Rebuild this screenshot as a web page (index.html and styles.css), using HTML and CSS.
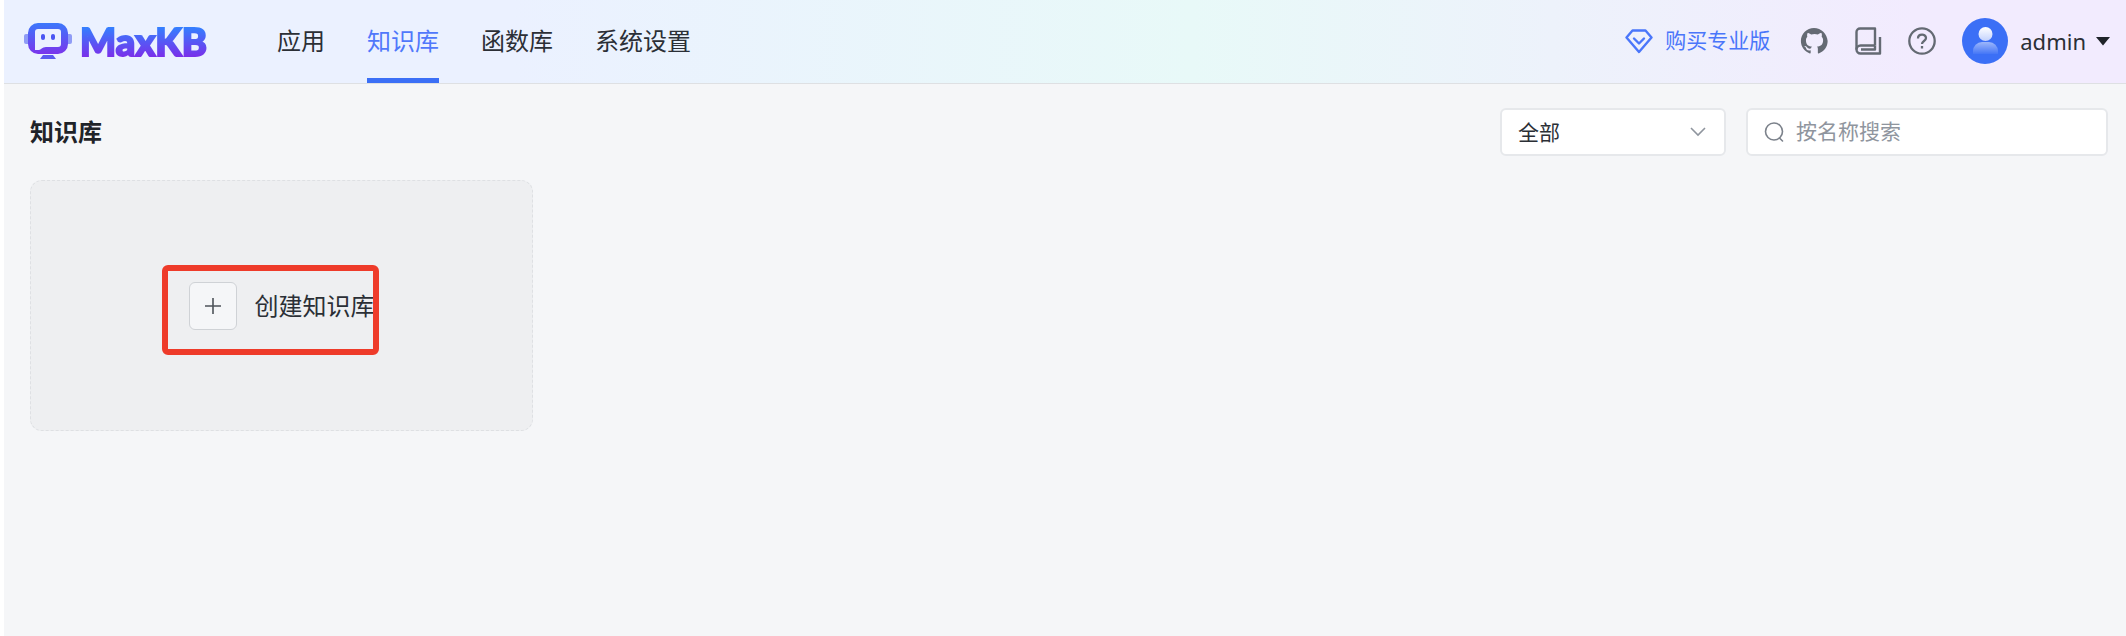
FILE: index.html
```html
<!DOCTYPE html>
<html lang="zh-CN">
<head>
    <meta charset="UTF-8">
    <meta name="viewport" content="width=device-width, initial-scale=1.0">
    <title>MaxKB</title>
    <link rel="stylesheet" href="styles.css">
</head>
<body>
    <header class="header">
        <a href="#" class="logo">
            <svg width="48" height="38" viewBox="0 0 48 38">
                <defs>
                    <linearGradient id="logoFill" x1="0" y1="0" x2="0" y2="1">
                        <stop offset="0" stop-color="#3c78fb"/>
                        <stop offset="1" stop-color="#7a35ec"/>
                    </linearGradient>
                </defs>
                <rect x="0" y="12" width="6" height="10" rx="2" fill="#8f9cf6"/>
                <rect x="42" y="12" width="6" height="10" rx="2" fill="#8f9cf6"/>
                <path d="M19 33h10l3 4H16z" fill="#5b5af0"/>
                <path fill="url(#logoFill)" fill-rule="evenodd" d="M14 1h20a10 10 0 0 1 10 10v11a10 10 0 0 1-10 10H14a10 10 0 0 1-10-10V11a10 10 0 0 1 10-10zM14 7a3 3 0 0 0-3 3v18h4c2 0 3-3 7-3h12a3 3 0 0 0 3-3V10a3 3 0 0 0-3-3z"/>
                <rect x="17" y="12" width="4" height="6" rx="2" fill="#4a56f3"/>
                <rect x="27" y="12" width="4" height="6" rx="2" fill="#4a56f3"/>
            </svg>
            <span class="logo-text">MaxKB</span>
        </a>

        <nav class="menu">
            <a href="#">应用</a>
            <a href="#" class="active">知识库</a>
            <a href="#">函数库</a>
            <a href="#">系统设置</a>
        </nav>

        <div class="tools">
            <a href="#" class="buy">
                <svg width="28" height="28" viewBox="0 0 28 28" fill="none" stroke="currentColor" stroke-width="2.4" stroke-linejoin="round" stroke-linecap="round">
                    <path d="M7.500 3.500h13l6 7L14 25 1.500 10.500z"/>
                    <path d="M9 11.500l5 5 5-5"/>
                </svg>
                <span class="buy-text">购买专业版</span>
            </a>
            <a href="#" class="tool" aria-label="GitHub">
                <svg width="28" height="28" viewBox="0 0 16 16" fill="currentColor">
                    <path d="M8 .5C3.900.5.5 3.900.5 8c0 3.300 2.200 6.100 5.100 7.100.4.100.5-.2.5-.4v-1.400c-2.100.500-2.500-.9-2.500-.9-.3-.9-.8-1.100-.8-1.100-.7-.5.1-.5.1-.5.800.1 1.200.800 1.200.800.700 1.100 1.700.800 2.200.600.1-.5.300-.8.500-1-1.700-.2-3.400-.8-3.400-3.700 0-.8.300-1.500.800-2-.1-.2-.3-1 .1-2 0 0 .600-.2 2.100.800a7 7 0 0 1 3.800 0c1.400-1 2.100-.8 2.100-.8.400 1 .1 1.800.1 2 .5.500.800 1.200.800 2 0 2.900-1.800 3.500-3.500 3.700.300.200.500.700.500 1.400v2.100c0 .2.100.5.500.4 3-1 5.100-3.800 5.100-7.100C15.500 3.900 12.100.5 8 .5z"/>
                </svg>
            </a>
            <a href="#" class="tool" aria-label="文档">
                <svg width="28" height="28" viewBox="0 0 28 28" fill="none" stroke="currentColor" stroke-width="2.400" stroke-linejoin="round">
                    <path d="M21 18.500V1.500H6A3.500 3.500 0 0 0 2.500 5v17.500"/>
                    <path d="M21 18.500H6.500a4 4 0 0 0 0 8H26V10"/>
                    <path d="M7 22.500h14v-4"/>
                </svg>
            </a>
            <a href="#" class="tool" aria-label="帮助">
                <svg width="28" height="28" viewBox="0 0 28 28" fill="none" stroke="currentColor" stroke-width="2.300">
                    <circle cx="14" cy="14" r="12.700"/>
                    <path d="M10 11.500c0-5 8-5 8-.500 0 3-4 3-4 6"/>
                    <path d="M14 19v2.500"/>
                </svg>
            </a>
            <button type="button" class="user">
                <svg class="avatar" width="46" height="46" viewBox="0 0 46 46">
                    <defs>
                        <linearGradient id="headFill" x1="0" y1="0" x2="0" y2="1">
                            <stop offset="0" stop-color="#fff"/>
                            <stop offset="1" stop-color="#c3d2fd"/>
                        </linearGradient>
                        <linearGradient id="bodyFill" x1="0" y1="0" x2="0" y2="1">
                            <stop offset="0" stop-color="#fff" stop-opacity=".5"/>
                            <stop offset="1" stop-color="#fff" stop-opacity=".05"/>
                        </linearGradient>
                    </defs>
                    <circle cx="23" cy="23" r="23" fill="#3b6ff6"/>
                    <path d="M11 36v-3a9 9 0 0 1 9-9h7a9 9 0 0 1 9 9v3z" fill="url(#bodyFill)"/>
                    <circle cx="23.500" cy="16" r="7" fill="url(#headFill)"/>
                </svg>
                admin
                <svg class="caret" width="14" height="10" viewBox="0 0 14 10" fill="#1f2329">
                    <path d="M0 1h14L7 9.500z"/>
                </svg>
            </button>
        </div>
    </header>

    <main class="content">
        <div class="title-bar">
            <h1>知识库</h1>
            <div class="filters">
                <div class="select-box">
                    <select aria-label="筛选">
                        <option>全部</option>
                    </select>
                    <svg width="16" height="10" viewBox="0 0 16 10" fill="none" stroke="#8f959e" stroke-width="1.600">
                        <path d="M1 1l7 7 7-7"/>
                    </svg>
                </div>
                <div class="search-box">
                    <svg width="20" height="20" viewBox="0 0 20 20" fill="none" stroke="#7c828b" stroke-width="1.600" stroke-linecap="round">
                        <circle cx="10" cy="9.500" r="8.500"/>
                        <path d="M15.500 16l3 3"/>
                    </svg>
                    <input type="text" placeholder="按名称搜索" aria-label="按名称搜索">
                </div>
            </div>
        </div>

        <div class="card-list">
            <button type="button" class="card-add">
                <span class="create">
                    <span class="plus">
                        <svg width="18" height="18" viewBox="0 0 18 18" stroke="#4e5359" stroke-width="1.600">
                            <path d="M9 1v16M1 9h16"/>
                        </svg>
                    </span>
                    <span class="create-text">创建知识库</span>
                    <span class="highlight"></span>
                </span>
            </button>
        </div>
    </main>
</body>
</html>
```

FILE: styles.css
```css
* {
    box-sizing: border-box;
}

body {
    margin: 0;
    padding-left: 4px;
    min-height: 100vh;
    display: flex;
    flex-direction: column;
    font-family: "Noto Sans", "Noto Sans CJK SC", sans-serif;
    font-size: 24px;
    color: #2b2f36;
    background-color: #fff;
}

a {
    color: inherit;
    text-decoration: none;
}

button,
input,
select {
    font-family: inherit;
    color: inherit;
}

svg {
    display: block;
    flex-shrink: 0;
}

/* header */
.header {
    display: flex;
    align-items: center;
    height: 84px;
    padding: 0 16px 2px 20px;
    border-bottom: 1px solid #dee0e3;
    background: linear-gradient(90deg, #ebf1ff 24%, #e8f9f8 56%, #f2ebfe 90%);
}

.logo {
    display: flex;
    align-items: center;
    gap: 8px;
}

.logo-text {
    font-family: Lato, sans-serif;
    font-size: 38px;
    font-weight: 900;
    line-height: 40px;
    color: transparent;
    background: linear-gradient(180deg, #3380ff 15%, #7a2fea 90%);
    background-clip: text;
    -webkit-background-clip: text;
    -webkit-text-stroke: 2px transparent;
}

.menu {
    display: flex;
    align-self: stretch;
    gap: 42px;
    margin-bottom: -2px;
    margin-left: 70px;
}

.menu a {
    display: flex;
    align-items: center;
    border-bottom: 5px solid transparent;
}

.menu .active {
    color: #5078fb;
    border-bottom-color: #3b6ff6;
}

.tools {
    display: flex;
    align-items: center;
    gap: 26px;
    margin-left: auto;
}

.buy {
    display: flex;
    align-items: center;
    gap: 12px;
    margin-right: 4px;
    font-size: 21px;
    color: #4a76fa;
}

.buy-text {
    padding-bottom: 4px;
}

.tool {
    color: #646a73;
}

.user {
    display: flex;
    align-items: center;
    padding: 0;
    border: none;
    background: none;
    font-size: 22px;
    cursor: pointer;
}

.avatar {
    margin-right: 12px;
}

.caret {
    margin-left: 10px;
}

/* page */
.content {
    flex: 1;
    padding: 24px 18px 24px 26px;
    background-color: #f5f6f8;
}

.title-bar {
    display: flex;
    align-items: center;
    justify-content: space-between;
    margin-bottom: 24px;
}

h1 {
    margin: 0;
    font-size: 24px;
    font-weight: 700;
    line-height: 36px;
    color: #1f2329;
}

.filters {
    display: flex;
    gap: 20px;
}

.select-box,
.search-box {
    display: flex;
    align-items: center;
    height: 48px;
    border: 2px solid #e6e8eb;
    border-radius: 6px;
    background-color: #fff;
}

.select-box {
    position: relative;
    width: 226px;
}

.select-box select {
    width: 100%;
    height: 100%;
    padding: 0 40px 0 16px;
    border: none;
    background: none;
    font-size: 21px;
    appearance: none;
}

.select-box svg {
    position: absolute;
    right: 18px;
    pointer-events: none;
}

.search-box {
    width: 362px;
    gap: 12px;
    padding: 0 16px;
}

.search-box input {
    flex: 1;
    min-width: 0;
    padding: 0 0 2px;
    border: none;
    outline: none;
    background: none;
    font-size: 21px;
}

.search-box input::placeholder {
    color: #8f959e;
}

.card-list {
    display: grid;
    grid-template-columns: repeat(4, 1fr);
    gap: 22px;
}

.card-add {
    display: flex;
    align-items: center;
    justify-content: center;
    height: 251px;
    padding: 0;
    border: 1px dashed #dee0e3;
    border-radius: 12px;
    background-color: #eeeff1;
    font-size: 24px;
    cursor: pointer;
}

.create {
    position: relative;
    display: flex;
    align-items: center;
    gap: 18px;
}

.create-text {
    padding-bottom: 2px;
}

.plus {
    display: flex;
    align-items: center;
    justify-content: center;
    width: 48px;
    height: 48px;
    border: 1px solid #cfd2d6;
    border-radius: 6px;
    background-color: #f5f6f8;
}

/* red frame round the create entry */
.highlight {
    position: absolute;
    top: -17px;
    right: -4px;
    bottom: -25px;
    left: -27px;
    border: 6px solid #ee3b2a;
    border-radius: 6px;
}
```
